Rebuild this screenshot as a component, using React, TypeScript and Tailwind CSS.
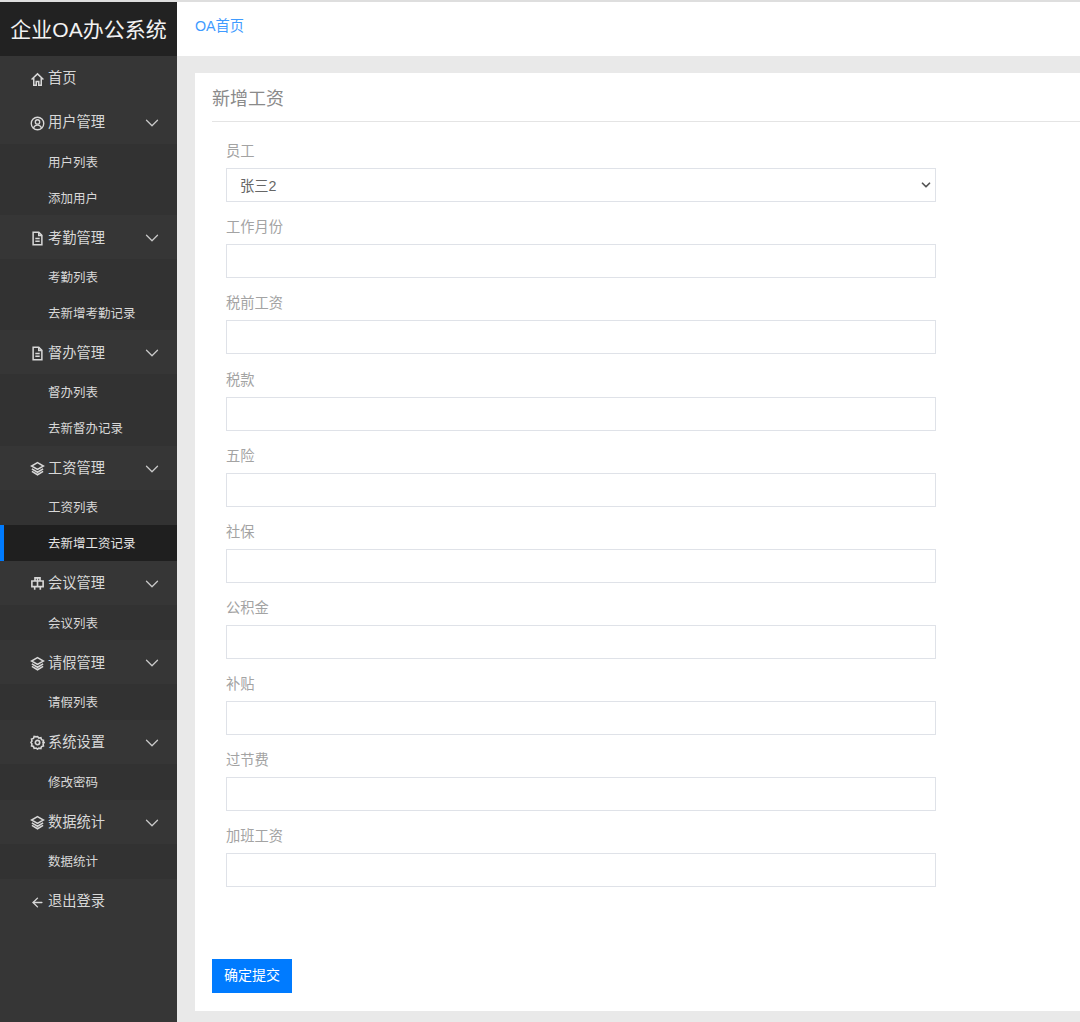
import { ArrowLeft, ChevronDown } from "lucide-react";
import type { ReactNode } from "react";

const HomeIcon = () => (
  <svg viewBox="0 0 24 24" width="15" height="15" fill="none" stroke="currentColor" strokeWidth="2.4">
    <path d="M2.500 12 12 3l9.500 9M6 9.500V21h4v-6h4v6h4V9.500" />
  </svg>
);

const UserIcon = () => (
  <svg viewBox="0 0 24 24" width="15" height="15" fill="none" stroke="currentColor" strokeWidth="2.2">
    <circle cx="12" cy="12" r="10" />
    <circle cx="12" cy="9.500" r="3.500" />
    <path d="M5.500 19c1.500-3 3.800-4.500 6.500-4.500s5 1.500 6.500 4.500" />
  </svg>
);

const FileIcon = () => (
  <svg viewBox="0 0 24 24" width="15" height="15" fill="none" stroke="currentColor" strokeWidth="2.400">
    <path d="M5 2h9l5 5v15H5z" />
    <path d="M14 2v5h5M8.500 12h7M8.500 16.500h7" />
  </svg>
);

const LayersIcon = () => (
  <svg viewBox="0 0 24 24" width="15" height="15" fill="none" stroke="currentColor" strokeWidth="2.400">
    <path d="M12 2.500 21.500 8 12 13.500 2.500 8z" />
    <path d="m3 12.500 9 5.500 9-5.500M3 16.500l9 5.500 9-5.500" />
  </svg>
);

const MeetingIcon = () => (
  <svg viewBox="0 0 24 24" width="15" height="15" fill="none" stroke="currentColor" strokeWidth="2.600">
    <path d="M8 8V3h8v5M3 8h18v9H3zM12 3v14M7.500 17v5M16.500 17v5" />
  </svg>
);

const GearIcon = () => (
  <svg viewBox="0 0 24 24" width="15" height="15" fill="none" stroke="currentColor" strokeWidth="2.600">
    <path d="M12 2.500 14.200 5l3.200-.6 1 3.100 3.100 1-.6 3.200L22.500 12l-1.600 2.300.6 3.200-3.100 1-1 3.100-3.200-.6L12 22.500 9.800 20.900l-3.200.6-1-3.100-3.100-1 .6-3.200L1.500 12l1.600-2.300-.6-3.200 3.100-1 1-3.100 3.200.6z" />
    <circle cx="12" cy="12" r="3.500" />
  </svg>
);

const menu: { icon: ReactNode; title: string; subs: string[] }[] = [
  { icon: <UserIcon />, title: "用户管理", subs: ["用户列表", "添加用户"] },
  { icon: <FileIcon />, title: "考勤管理", subs: ["考勤列表", "去新增考勤记录"] },
  { icon: <FileIcon />, title: "督办管理", subs: ["督办列表", "去新督办记录"] },
  { icon: <LayersIcon />, title: "工资管理", subs: ["工资列表", "去新增工资记录"] },
  { icon: <MeetingIcon />, title: "会议管理", subs: ["会议列表"] },
  { icon: <LayersIcon />, title: "请假管理", subs: ["请假列表"] },
  { icon: <GearIcon />, title: "系统设置", subs: ["修改密码"] },
  { icon: <LayersIcon />, title: "数据统计", subs: ["数据统计"] },
];

const fields = ["工作月份", "税前工资", "税款", "五险", "社保", "公积金", "补贴", "过节费", "加班工资"];

const NavItem = ({ icon, title, arrow }: { icon: ReactNode; title: string; arrow?: boolean }) => (
  <div className="flex h-[44px] items-center pt-[2px] pr-[14px] pl-[30px] text-[14.250px] text-[#d8d8d8]">
    <span className="flex w-[18px] shrink-0">{icon}</span>
    <span className="flex-1">{title}</span>
    {arrow && <ChevronDown size={22} strokeWidth={1.4} className="text-[#c8c8c8]" />}
  </div>
);

const App = () => {
  return (
    <div className="flex h-[1022px] w-[1080px] flex-col overflow-hidden bg-[#e9e9e9] font-['Liberation_Sans','Noto_Sans_CJK_SC',sans-serif]">
      <div className="h-[2px] shrink-0 bg-[#dedede]" />
      <div className="flex min-h-0 flex-1">
        <aside className="w-[177px] shrink-0 bg-[#363636]">
          <div className="flex h-[54px] items-center justify-center bg-[#222222] pt-[2px] text-[21px] whitespace-nowrap text-[#f2f2f2]">
            企业OA办公系统
          </div>
          <NavItem icon={<HomeIcon />} title="首页" />
          {menu.map((m) => (
            <div key={m.title}>
              <NavItem icon={m.icon} title={m.title} arrow />
              <div className="bg-[#323232]">
                {m.subs.map((s) => (
                  <div
                    key={s}
                    className={
                      s === "去新增工资记录"
                        ? "flex h-[35.600px] items-center border-l-[4px] border-[#007bff] bg-[#1f1f1f] pt-[3px] pl-[44px] text-[12.500px] text-[#e4e4e4]"
                        : "flex h-[35.600px] items-center pt-[3px] pl-[48px] text-[12.500px] text-[#d8d8d8]"
                    }
                  >
                    {s}
                  </div>
                ))}
              </div>
            </div>
          ))}
          <NavItem icon={<ArrowLeft size={15} strokeWidth={2.2} />} title="退出登录" />
        </aside>

        <main className="flex min-w-0 flex-1 flex-col">
          <div className="flex h-[54px] shrink-0 items-center bg-white pb-[5px] pl-[18px] text-[14.250px] text-[#3f9bff]">
            OA首页
          </div>
          <div className="mt-[17px] mb-[11px] ml-[18px] flex-1 bg-white pl-[17px]">
            <div className="flex h-[49px] items-center border-b border-[#e4e4e4] pt-[4px] text-[18px] text-[#8a8a8a]">
              新增工资
            </div>
            <form className="pt-[15.300px]">
              <div className="pl-[14px]">
                <div className="mb-[11.100px] w-[710px]">
                  <label className="block h-[31px] text-[14.250px] leading-[28px] text-[#a3a3a3]">员工</label>
                  <div className="relative">
                    <select className="block h-[34px] w-full appearance-none border border-[#dfe2e8] bg-white pt-[2px] pl-[13px] text-[14.250px] text-[#666666] outline-none">
                      <option>张三2</option>
                    </select>
                    <ChevronDown size={14} strokeWidth={3} className="absolute top-[10px] right-[3px] text-[#555555]" />
                  </div>
                </div>
                {fields.map((f) => (
                  <div key={f} className="mb-[11.100px] w-[710px]">
                    <label className="block h-[31px] text-[14.250px] leading-[28px] text-[#a3a3a3]">{f}</label>
                    <input className="block h-[34px] w-full border border-[#dfe2e8] bg-white outline-none" />
                  </div>
                ))}
              </div>
              <button
                type="button"
                className="mt-[60.700px] h-[34px] w-[80px] bg-[#007bff] text-[14px] text-white"
              >
                确定提交
              </button>
            </form>
          </div>
        </main>
      </div>
    </div>
  );
};

export default App;
